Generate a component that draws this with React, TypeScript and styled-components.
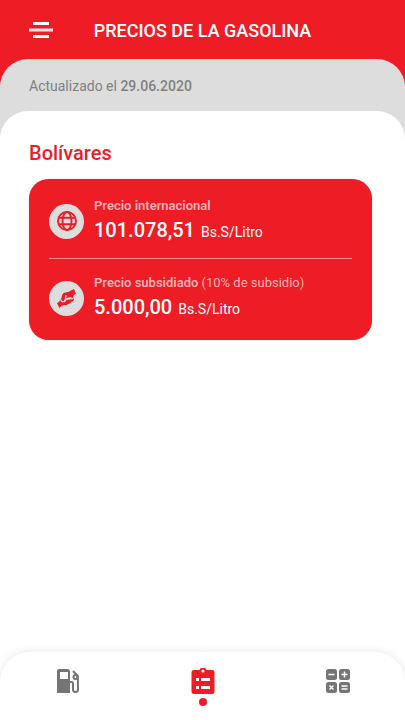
import React from "react";
import styled, { createGlobalStyle } from "styled-components";

const GlobalStyle = createGlobalStyle`
  *, *::before, *::after { box-sizing: border-box; }
  body {
    margin: 0;
    background: #fff;
    font-family: Roboto, "Liberation Sans", sans-serif;
  }
`;

const Screen = styled.div`
  min-height: 100vh;
  display: flex;
  flex-direction: column;
  background: #ee1c25;
`;

const Header = styled.header`
  display: grid;
  grid-template-columns: 24px 1fr 24px;
  align-items: center;
  height: 59px;
  padding: 3px 29px 0;
  color: #fff;
`;

const MenuButton = styled.button`
  display: flex;
  margin-bottom: 3px;
  padding: 0;
  border: 0;
  background: none;
  color: inherit;
  cursor: pointer;
`;

const Title = styled.h1`
  margin: 0;
  font-size: 18px;
  line-height: 24px;
  font-weight: 500;
  text-align: center;
`;

const Sheet = styled.div`
  flex: 1;
  display: flex;
  flex-direction: column;
  border-radius: 28px 28px 0 0;
  background: #ddd;
`;

const Updated = styled.p`
  margin: 0;
  padding: 17px 29px 15px;
  font-size: 14px;
  line-height: 20px;
  color: #808080;

  strong {
    font-weight: 500;
  }
`;

const Content = styled.main`
  flex: 1;
  display: flex;
  flex-direction: column;
  border-radius: 28px 28px 0 0;
  background: #fff;
`;

const Prices = styled.section`
  flex: 1;
  padding: 30px 33px 24px 29px;
`;

const Currency = styled.h2`
  margin: 0 0 14px;
  font-size: 20px;
  line-height: 24px;
  font-weight: 500;
  color: #ee1c25;
`;

const Card = styled.div`
  padding: 0 20px;
  border-radius: 20px;
  background: #ee1c25;
  box-shadow: 0 0 1px rgba(120, 60, 60, 0.6);
  color: #fff;
`;

const PriceRow = styled.div`
  display: flex;
  align-items: center;
  gap: 10px;
  padding: 18px 0 13px;

  & + & {
    padding: 15px 0 18px;
    border-top: 1px solid rgba(255, 255, 255, 0.5);
  }
`;

const Badge = styled.span`
  display: grid;
  place-items: center;
  flex: none;
  width: 35px;
  height: 35px;
  border-radius: 50%;
  background: #ddd;
  color: #ee1c25;
`;

const PriceText = styled.div`
  display: flex;
  flex-direction: column;
  gap: 2px;
`;

const PriceLabel = styled.div`
  font-size: 13px;
  line-height: 18px;
  color: #f9b3b6;

  strong {
    font-weight: 600;
  }
`;

const PriceValue = styled.div`
  display: flex;
  align-items: baseline;
  gap: 6px;
  font-size: 14px;
  line-height: 26px;
`;

const Amount = styled.span`
  font-size: 20px;
  font-weight: 500;
`;

const TabBar = styled.nav`
  display: grid;
  grid-template-columns: repeat(3, 1fr);
  height: 68px;
  border-radius: 30px 30px 0 0;
  background: #fff;
  box-shadow: 0 0 10px rgba(0, 0, 0, 0.1);
`;

const Tab = styled.button<{ $active?: boolean }>`
  display: flex;
  flex-direction: column;
  align-items: center;
  gap: 4px;
  padding: 16px 0 0;
  border: 0;
  background: none;
  color: ${(p) => (p.$active ? "#ee1c25" : "#757575")};
  cursor: pointer;
`;

const ActiveDot = styled.span`
  width: 8px;
  height: 8px;
  border-radius: 50%;
  background: currentColor;
`;

const MenuIcon = () => (
  <svg width="24" height="18" viewBox="0 0 24 18" fill="currentColor" aria-hidden="true">
    <path d="M4 1h16v3H4zM4 14h16v3H4z" />
    <path d="M0 7.500h24v3H0z" opacity="0.88" />
  </svg>
);

const GlobeIcon = () => (
  <svg width="20" height="20" viewBox="0 0 20 20" fill="none" stroke="currentColor" strokeWidth="1.900" aria-hidden="true">
    <circle cx="10" cy="10" r="9" />
    <ellipse cx="10" cy="10" rx="4.500" ry="9" />
    <path d="M2 6.800h16M2 13.200h16" />
  </svg>
);

const HandsIcon = () => (
  <svg width="19" height="19" viewBox="0 0 57 57" aria-hidden="true">
    <g fill="currentColor">
      <path d="M43 4 51 0l6 14-7 4c0 5-2 9-6 11l-1-5-15 3 1-9-4 1-2 13c-2 4-7 5-9 2-2-2-2-5-1-8l3-9c1-3 3-5 7-6l13-3z" />
      <path d="M0 43l8-6 1-9c0 8 4 13 10 12 5 0 8-3 9-7l17-2c4 0 5-3 5-6 3 8-1 13-8 14-1 4-4 6-8 6-3 3-7 3-12 3l-8 2-7 7z" />
    </g>
  </svg>
);

const PumpIcon = () => (
  <svg width="24" height="26" viewBox="0 0 24 26" aria-hidden="true">
    <path fill="currentColor" fillRule="evenodd" d="M3 1h8a3 3 0 0 1 3 3v21H1V3a2 2 0 0 1 2-2zm1 3v7h8V4z" />
    <path
      fill="none"
      stroke="currentColor"
      strokeWidth="2"
      d="M14 14h1.500q1.500 0 1.500 1.500v6q0 2.500 2.500 2.500t2.500-2.500L21.800 8 17 3"
    />
    <circle cx="19.500" cy="9" r="2" fill="none" stroke="currentColor" strokeWidth="2" />
  </svg>
);

const ListIcon = () => (
  <svg width="24" height="26" viewBox="0 0 24 26" aria-hidden="true">
    <path
      fill="currentColor"
      fillRule="evenodd"
      d="M3 2h5.500a3.700 3.700 0 0 1 7 0H21a2.500 2.500 0 0 1 2.500 2.500v19A2.500 2.500 0 0 1 21 26H3a2.500 2.500 0 0 1-2.500-2.500v-19A2.500 2.500 0 0 1 3 2zm9-.5a1.500 1.500 0 1 0 0 3 1.500 1.500 0 0 0 0-3zM5 10v3h3v-3zm5 0v3h9v-3zM5 18v3h3v-3zm5 0v3h9v-3z"
    />
  </svg>
);

const CalculatorIcon = () => (
  <svg width="24" height="26" viewBox="0 0 24 26" aria-hidden="true">
    <g fill="currentColor">
      <rect x="0" y="1" width="11" height="11" rx="2.500" />
      <rect x="13" y="1" width="11" height="11" rx="2.500" />
      <rect x="0" y="14" width="11" height="11" rx="2.500" />
      <rect x="13" y="14" width="11" height="11" rx="2.500" />
    </g>
    <path
      fill="none"
      stroke="#fff"
      strokeWidth="1.500"
      d="M2.500 6.500h6M15.500 6.500h6M18.500 3.500v6M3.500 17.500l4 4M7.500 17.500l-4 4M15.500 18h6M15.500 21h6"
    />
  </svg>
);

interface Price {
  label: string;
  note?: string;
  amount: string;
  icon: React.ReactNode;
}

const prices: Price[] = [
  { label: "Precio internacional", amount: "101.078,51", icon: <GlobeIcon /> },
  { label: "Precio subsidiado", note: "(10% de subsidio)", amount: "5.000,00", icon: <HandsIcon /> },
];

export default function App() {
  return (
    <>
      <GlobalStyle />
      <Screen>
        <Header>
          <MenuButton type="button" aria-label="Menú">
            <MenuIcon />
          </MenuButton>
          <Title>PRECIOS DE LA GASOLINA</Title>
        </Header>
        <Sheet>
          <Updated>
            Actualizado el <strong>29.06.2020</strong>
          </Updated>
          <Content>
            <Prices>
              <Currency>Bolívares</Currency>
              <Card>
                {prices.map((price) => (
                  <PriceRow key={price.label}>
                    <Badge>{price.icon}</Badge>
                    <PriceText>
                      <PriceLabel>
                        <strong>{price.label}</strong> {price.note}
                      </PriceLabel>
                      <PriceValue>
                        <Amount>{price.amount}</Amount>
                        <span>Bs.S/Litro</span>
                      </PriceValue>
                    </PriceText>
                  </PriceRow>
                ))}
              </Card>
            </Prices>
            <TabBar aria-label="Principal">
              <Tab type="button" aria-label="Estaciones">
                <PumpIcon />
              </Tab>
              <Tab type="button" aria-label="Precios" aria-current="page" $active>
                <ListIcon />
                <ActiveDot />
              </Tab>
              <Tab type="button" aria-label="Calculadora">
                <CalculatorIcon />
              </Tab>
            </TabBar>
          </Content>
        </Sheet>
      </Screen>
    </>
  );
}
